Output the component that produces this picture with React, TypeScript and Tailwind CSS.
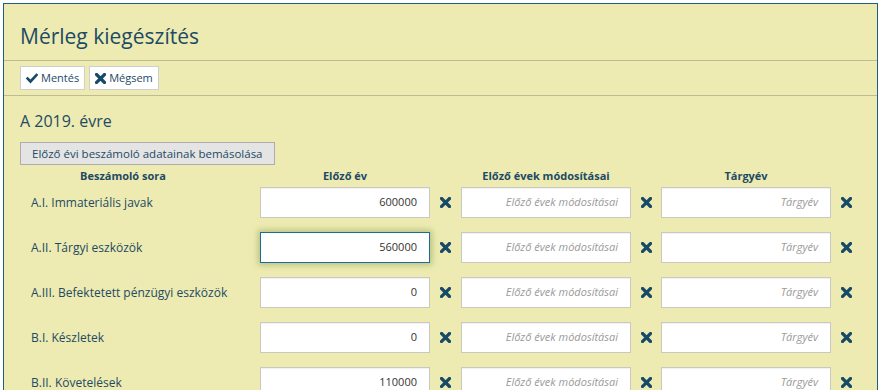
import React from 'react'

const rows = [
  { label: 'A.I. Immateriális javak', value: '600000' },
  { label: 'A.II. Tárgyi eszközök', value: '560000', focused: true },
  { label: 'A.III. Befektetett pénzügyi eszközök', value: '0' },
  { label: 'B.I. Készletek', value: '0' },
  { label: 'B.II. Követelések', value: '110000' },
]

function Times() {
  return (
    <svg width="11" height="11" viewBox="0 0 11 11" className="block">
      <path d="M1.5 1.5 L9.5 9.5 M9.5 1.5 L1.5 9.5" stroke="#174a67" strokeWidth="3.2" strokeLinecap="square" />
    </svg>
  )
}

function Check() {
  return (
    <svg width="12" height="11" viewBox="0 0 12 11" className="block">
      <path d="M1.5 5.5 L4.5 8.5 L10.5 2" stroke="#174a67" strokeWidth="2.6" fill="none" strokeLinecap="square" />
    </svg>
  )
}

function Field({ value, placeholder, focused }: { value?: string; placeholder: string; focused?: boolean }) {
  return (
    <div
      className={
        'w-[170px] h-[31px] bg-white flex items-center justify-end pr-[12px] text-[11px] ' +
        (focused
          ? 'border border-[#1d6a9c] shadow-[0_0_6px_2px_rgba(140,160,90,0.55)]'
          : 'border border-[#c9c9c2] shadow-[inset_0_1px_1px_rgba(0,0,0,0.06)]')
      }
    >
      {value ? (
        <span className="text-[#333]">{value}</span>
      ) : (
        <span className="italic text-[#9a9a9a]">{placeholder}</span>
      )}
    </div>
  )
}

function XCell({ w }: { w: string }) {
  return (
    <div className={w + ' flex justify-center'}>
      <Times />
    </div>
  )
}

export default function App() {
  return (
    <div className="w-[881px] h-[390px] overflow-hidden bg-white p-[3px]" style={{ fontFamily: '"Open Sans", "Noto Sans", sans-serif' }}>
      <div className="h-[400px] bg-[#edebb1] border border-[#1f5f85] border-b-0 text-[#1d4a65]">
        {/* Title */}
        <div className="px-4 pt-[19px] pb-[10px] border-b border-[#bfbc95]">
          <h1 className="text-[21px] leading-[27px]">Mérleg kiegészítés</h1>
        </div>

        {/* Toolbar */}
        <div className="px-4 pt-[5px] pb-[5px] flex gap-[4px] border-b border-[#bfbc95]">
          <button className="h-[24px] px-[5px] bg-white border border-[#cfcfcf] flex items-center gap-[3px] text-[11px] text-[#1d4a65]">
            <Check />
            Mentés
          </button>
          <button className="h-[24px] px-[5px] bg-white border border-[#cfcfcf] flex items-center gap-[3px] text-[11px] text-[#1d4a65]">
            <Times />
            Mégsem
          </button>
        </div>

        {/* Content */}
        <div className="px-4 pt-[14px]">
          <h2 className="text-[16px] leading-[22px]">A 2019. évre</h2>
          <button className="mt-[10px] h-[23px] px-[11px] bg-[#e4e4e4] border border-[#adadad] text-[11.5px] text-[#1d4a65] leading-none">
            Előző évi beszámoló adatainak bemásolása
          </button>

          <div className="flex items-center h-[22px] font-bold text-[11px]">
            <div className="w-[240px] pr-[34px] text-center">Beszámoló sora</div>
            <div className="w-[170px] text-center">Előző év</div>
            <div className="w-[31px]" />
            <div className="w-[170px] text-center">Előző évek módosításai</div>
            <div className="w-[30px]" />
            <div className="w-[170px] text-center">Tárgyév</div>
          </div>

          <div className="flex flex-col gap-[14px]">
            {rows.map((r) => (
              <div key={r.label} className="flex items-center">
                <div className="w-[240px] pl-[11px] text-[12px]">{r.label}</div>
                <Field value={r.value} placeholder="" focused={r.focused} />
                <XCell w="w-[31px]" />
                <Field placeholder="Előző évek módosításai" />
                <XCell w="w-[30px]" />
                <Field placeholder="Tárgyév" />
                <XCell w="w-[30px]" />
              </div>
            ))}
          </div>
        </div>
      </div>
    </div>
  )
}
